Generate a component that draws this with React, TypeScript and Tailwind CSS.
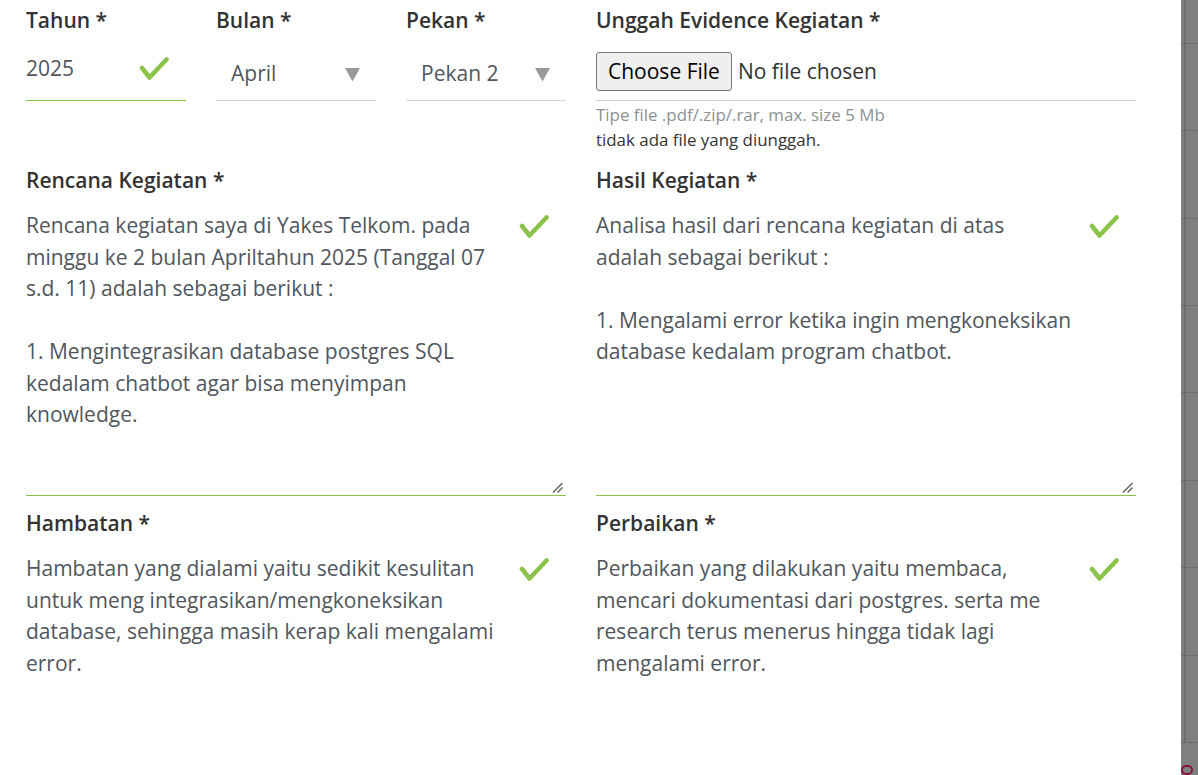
import React from 'react';

const rencana = `Rencana kegiatan saya di Yakes Telkom. pada
minggu ke 2 bulan Apriltahun 2025 (Tanggal 07
s.d. 11) adalah sebagai berikut :

1. Mengintegrasikan database postgres SQL
kedalam chatbot agar bisa menyimpan
knowledge.`;

const hasil = `Analisa hasil dari rencana kegiatan di atas
adalah sebagai berikut :

1. Mengalami error ketika ingin mengkoneksikan
database kedalam program chatbot.`;

const hambatan = `Hambatan yang dialami yaitu sedikit kesulitan
untuk meng integrasikan/mengkoneksikan
database, sehingga masih kerap kali mengalami
error.`;

const perbaikan = `Perbaikan yang dilakukan yaitu membaca,
mencari dokumentasi dari postgres. serta me
research terus menerus hingga tidak lagi
mengalami error.`;

function Check({ className }: { className: string }) {
    return (
        <svg className={className} width="30" height="25" viewBox="0 0 30 25" fill="none">
            <path d="M3 12 L10.5 21.5 L27.5 3.5" stroke="#8bc34a" strokeWidth="4.5" strokeLinecap="round" strokeLinejoin="round" />
        </svg>
    );
}

function Label({ children, className = '' }: { children: React.ReactNode; className?: string }) {
    return <div className={`text-[21px] leading-[28px] font-semibold text-[#333] ${className}`}>{children}</div>;
}

function Caret() {
    return (
        <svg className="absolute right-[16px] top-[28px]" width="15" height="14" viewBox="0 0 15 14">
            <polygon points="0,0 15,0 7.5,13.5" fill="#9a9a9a" />
        </svg>
    );
}

function Resizer() {
    return (
        <svg className="absolute right-[3px] bottom-[2px]" width="11" height="11" viewBox="0 0 11 11">
            <line x1="1" y1="10.5" x2="10.5" y2="1" stroke="#5f5f5f" strokeWidth="1.4" />
            <line x1="5.5" y1="10.5" x2="10.5" y2="5.5" stroke="#5f5f5f" strokeWidth="1.4" />
        </svg>
    );
}

function Area({ value, bordered = true }: { value: string; bordered?: boolean }) {
    return (
        <div className={bordered ? 'relative h-[302px] border-b border-[#8bc34a]' : 'relative h-[302px]'}>
            <div className="whitespace-pre-line pt-[16px] pr-[28px] text-[21px] leading-[31.5px] text-[#51565c]">{value}</div>
            <Check className="absolute right-[17px] top-[20px]" />
            {bordered && <Resizer />}
        </div>
    );
}

export default function App() {
    const rows = [0, 1, 2, 3, 4, 5, 6, 7];
    return (
        <div className="w-[1198px] h-[775px] flex overflow-hidden bg-white" style={{ fontFamily: '"Open Sans", "Noto Sans", sans-serif' }}>
            <div className="flex-1 pl-[26px] pr-[45px] overflow-hidden">
                <div className="grid grid-cols-[540px_540px] gap-x-[30px]">
                    {/* top row */}
                    <div className="grid grid-cols-3 gap-x-[30px] items-start">
                        <div>
                            <Label className="pt-[6px] h-[40px]">Tahun *</Label>
                            <div className="relative h-[61px] border-b border-[#8bc34a]">
                                <div className="pt-[13px] text-[21px] leading-[31.5px] text-[#51565c]">2025</div>
                                <Check className="absolute right-[17px] top-[16px]" />
                            </div>
                        </div>
                        <div>
                            <Label className="pt-[6px] h-[40px]">Bulan *</Label>
                            <div className="relative h-[61px] border-b border-[#cfd3d8]">
                                <div className="pt-[18px] pl-[15px] text-[21px] leading-[31.5px] text-[#51565c]">April</div>
                                <Caret />
                            </div>
                        </div>
                        <div>
                            <Label className="pt-[6px] h-[40px]">Pekan *</Label>
                            <div className="relative h-[61px] border-b border-[#cfd3d8]">
                                <div className="pt-[18px] pl-[15px] text-[21px] leading-[31.5px] text-[#51565c]">Pekan 2</div>
                                <Caret />
                            </div>
                        </div>
                    </div>
                    <div>
                        <Label className="pt-[6px] h-[40px]">Unggah Evidence Kegiatan *</Label>
                        <div className="h-[61px] border-b border-[#cfd3d8] pt-[12px]">
                            <div className="flex items-center">
                                <button className="h-[39px] px-[11px] border border-[#767676] rounded-[3px] bg-[#efefef] text-[21px] text-black leading-none">
                                    Choose File
                                </button>
                                <span className="ml-[6px] text-[21px] text-[#333]">No file chosen</span>
                            </div>
                        </div>
                        <div className="pt-[1px] text-[16.9px] leading-[25px]">
                            <div className="text-[#8d9196]">Tipe file .pdf/.zip/.rar, max. size 5 Mb</div>
                            <div className="text-[#333]">tidak ada file yang diunggah.</div>
                        </div>
                    </div>

                    {/* row 2 */}
                    <div className="pt-[14px]">
                        <Label>Rencana Kegiatan *</Label>
                        <Area value={rencana} />
                    </div>
                    <div className="pt-[14px]">
                        <Label>Hasil Kegiatan *</Label>
                        <Area value={hasil} />
                    </div>

                    {/* row 3 */}
                    <div className="pt-[13px]">
                        <Label>Hambatan *</Label>
                        <Area value={hambatan} bordered={false} />
                    </div>
                    <div className="pt-[13px]">
                        <Label>Perbaikan *</Label>
                        <Area value={perbaikan} bordered={false} />
                    </div>
                </div>
            </div>

            {/* dimmed backdrop strip */}
            <div className="w-[17px] h-full bg-[#7f7f7f] flex flex-col">
                <div className="flex-none h-[743px] ml-[3px] border-l-2 border-[#6f6f6f] flex flex-col">
                    <div className="h-[44px] border-b border-[#6c6c6c] -ml-[5px]" />
                    {rows.map((r) => (
                        <div key={r} className="h-[87.5px] border-b border-[#6c6c6c] -ml-[5px]" />
                    ))}
                </div>
                <div className="mt-[22px] w-[12px] h-[12px] rounded-full border-2 border-[#8a1538]" />
            </div>
        </div>
    );
}
